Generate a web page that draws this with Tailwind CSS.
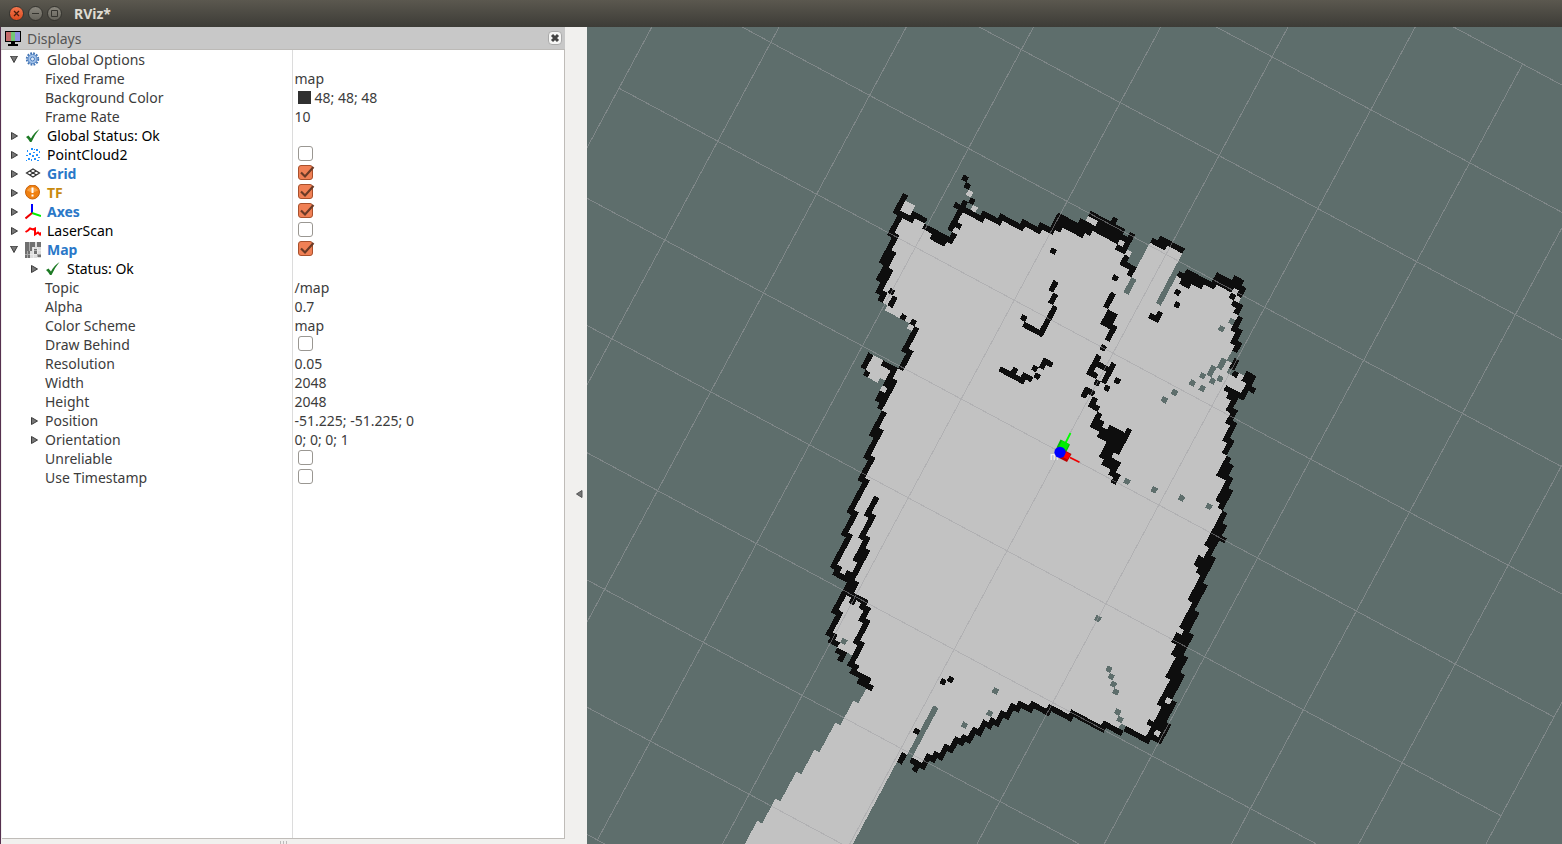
<!DOCTYPE html>
<html lang="en">
<head>
<meta charset="utf-8">
<title>RViz*</title>
<script src="https://cdn.jsdelivr.net/npm/@tailwindcss/browser@4"></script>
</head>
<body class="h-screen flex flex-col overflow-hidden bg-[#f1f0ee] font-['Noto_Sans',sans-serif] text-[14px] leading-[19px] text-[#3c3c3c]">

<svg class="hidden" aria-hidden="true">
  <symbol id="closed" viewBox="0 0 8 8"><path d="M1.500 .5v7L7.500 4z" fill="#777" stroke="#3c3c3c"/></symbol>
  <symbol id="open" viewBox="0 0 8 8"><path d="M.5 0h7L4 6.500z" fill="#777" stroke="#3c3c3c"/></symbol>
  <symbol id="ok" viewBox="0 0 16 16"><path d="M1 9l2.500-1.500 2.500 3Q9 4.500 14.500 1 9.500 7 6.500 14H5Q3.500 11 1 9z" fill="#1d7a24"/></symbol>
</svg>

<header class="h-[27px] shrink-0 flex items-center gap-1 pl-[9px] bg-linear-to-b from-[#5b584f] to-[#3d3c37]">
  <button aria-label="Close" class="size-[15px] rounded-full bg-linear-to-b from-[#f4764d] to-[#dc4a1c] border border-[#35342f]"><svg viewBox="0 0 13 13"><path d="M4 4l5 5M9 4l-5 5" stroke="#4a1d0c" stroke-width="1.300"/></svg></button>
  <button aria-label="Minimize" class="size-[15px] rounded-full bg-linear-to-b from-[#8a877e] to-[#65635b] border border-[#35342f]"><svg viewBox="0 0 13 13"><path d="M3 6.500h7" stroke="#35342f"/></svg></button>
  <button aria-label="Maximize" class="size-[15px] rounded-full bg-linear-to-b from-[#8a877e] to-[#65635b] border border-[#35342f]"><svg viewBox="0 0 13 13"><path d="M3.500 3.500h6v6h-6z" fill="none" stroke="#35342f"/></svg></button>
  <h1 class="pl-2 font-bold text-[#dfdbd2]">RViz*</h1>
</header>

<div class="flex-1 min-h-0 flex">
  <aside class="w-[565px] shrink-0 flex flex-col border-l border-[#55304f]">
    <div class="h-[23px] shrink-0 flex items-center pl-1 pr-[3px] bg-[#c8c8c8] border-b border-[#bcbab7] text-[#555]">
      <svg class="size-4" viewBox="0 0 16 16" shape-rendering="crispEdges"><path d="M0 1h16v11H0z"/><path d="M1 2h5v9H1z" fill="#c46a6a"/><path d="M6 2h4v9H6z" fill="#74c774"/><path d="M10 2h5v9h-5z" fill="#9090e0"/><path d="M6 12h4v2H6zM3 14h10v2H3z"/></svg>
      <h2 class="pl-1.5 flex-1">Displays</h2>
      <button aria-label="Close Displays" class="size-[14px] rounded bg-[#f7f7f6] border border-[#aaa]"><svg viewBox="0 0 12 12"><path d="M3 3l6 6M9 3l-6 6" stroke="#444" stroke-width="3"/></svg></button>
    </div>
    <div class="flex-1 min-h-0 ml-px bg-white border-r border-b border-[#bfbcb8]">
      <table class="w-full h-full table-fixed border-collapse">
        <colgroup><col class="w-[290px]"><col></colgroup>
        <tbody id="tree"></tbody>
      </table>
    </div>
    <div class="h-[5px] shrink-0 flex gap-0.5 pl-[279px] pt-0.5"><i class="w-px bg-[#bbb]"></i><i class="w-px bg-[#bbb]"></i><i class="w-px bg-[#bbb]"></i></div>
  </aside>
  <button aria-label="Hide left panel" class="w-[22px] shrink-0 flex items-center justify-center pl-1.5 pt-[116px] bg-[#f1f0ee]"><svg class="size-2" viewBox="0 0 8 8"><path d="M7 .5v7L1.500 4z" fill="#777" stroke="#555"/></svg></button>
  <main class="flex-1 min-w-0 bg-[#5e6e6c]">
    <svg class="block w-full h-full" viewBox="587 27 975 817" preserveAspectRatio="xMinYMin slice" shape-rendering="crispEdges" role="img" aria-label="3D view of the map">
      <g transform="matrix(4.940 2.650 -2.650 4.940 1060 452)">
        <path id="free" fill="#c2c2c2"/>
        <path id="wall" fill="#0e0e0e"/>
        <path id="gap" fill="#5e6e6c"/>
        <path id="speck" fill="#c2c2c2"/>
      </g>
      <path id="grid" fill="none" stroke="#a0a0a4" stroke-opacity=".5"/>
      <text x="1050" y="460" fill="#fff" font-size="10" font-family="Liberation Sans, sans-serif">m</text>
      <g shape-rendering="auto">
        <path d="M1064 446l6.500-13" stroke="#0f0" stroke-width="1.800"/>
        <path d="M1070 457.500l9.500 4.800" stroke="#e00" stroke-width="1.800"/>
        <path d="M1060.500 439.500l9.500 5-4 8-9.500-5z" fill="#0b0"/><path d="M1062 440.500l7 3.500-3 6-7-3.500z" fill="#0e0"/>
        <path d="M1064 450l7.500 4-4.500 8-8-4z" fill="#b00"/><path d="M1066 452l4.500 2.500-3 5-4.500-2.500z" fill="#f00"/>
        <circle cx="1060" cy="452.300" r="5.600" fill="#00f"/>
      </g>
    </svg>
  </main>
</div>

<script>
// ---- Displays tree ----
const svg = (body, extra = '') => `<svg class="size-4 shrink-0" viewBox="0 0 16 16" ${extra}>${body}</svg>`;
const crisp = 'shape-rendering="crispEdges"';
const icons = {
  gear: svg('<circle cx="7.500" cy="7" r="5.800" fill="none" stroke="#3f72b4" stroke-width="1.800" stroke-dasharray="1.800 1.236"/><circle cx="7.500" cy="7" r="4.600" fill="#a5c4ea" stroke="#4a7dbf"/><circle cx="7.500" cy="7" r="2" fill="#dfeaf8" stroke="#4a7dbf"/>'),
  ok: svg('<use href="#ok"/>'),
  cloud: svg('<path d="M6 1h2v2H6zM11 2h2v2h-2zM2 3h1v2H2zM8 5h2v1H8zM14 4h1v2h-1zM4 6h2v2H4zM1 8h2v1H1zM7 8h2v2H7zM11 7h2v2h-2zM13 10h2v1h-2zM3 11h2v2H3zM6 12h1v2H6zM9 11h2v2H9zM12 13h2v1h-2zM1 13h1v1H1zM9 2h1v1H9z" fill="#1e90ff"/>', crisp),
  grid: svg('<path d="M1.500 7L8 3l6.500 4L8 11zM4.800 5l6.500 4M11.200 5l-6.500 4" fill="none" stroke="#333" stroke-width="1.200"/>'),
  tf: svg('<circle cx="7.500" cy="7" r="7" fill="#f08010" stroke="#c8620a"/><path d="M2 5.500a6 5 0 0 1 11 0q-5.500 3-11 0z" fill="#f9b060" opacity=".7"/><path d="M6.500 2.500h2V8h-2zM6.500 9.500h2v2h-2z" fill="#fff"/>'),
  axes: svg('<path d="M7 9V0" stroke="#00f" stroke-width="2"/><path d="M7 9l9 3" stroke="#0e0" stroke-width="2"/><path d="M7 9L.5 14.500" stroke="#e00" stroke-width="2"/>'),
  laser: svg('<path d="M.5 9L3 7.500l2-2 3 1 2-1v6l3-2 2 2 1-2" fill="none" stroke="#f00" stroke-width="2"/>'),
  map: svg('<path d="M0 0h16v16H0z" fill="#dcdcdc"/><path d="M0 0h10v5H7v4H5v7H0zM12 0h4v5h-4zM9 7h3v5H9zM12 12h4v3h-4z" fill="#707070"/><path d="M2.500 9v7M0 12.500h16M12.500 5v11M8.500 5v11M9 8.500h7M4.500 0v9" stroke="#fff" stroke-opacity=".4"/>', crisp),
};
const tone = { dim: 'text-[#3c3c3c]', ok: 'text-black', on: 'font-bold text-[#2a78c8]', warn: 'font-bold text-[#c88a10]' };
// level, expander, icon, label, tone, value
const rows = [
  [0, 'open', 'gear', 'Global Options', 'dim'],
  [1, '', '', 'Fixed Frame', 'dim', 'map'],
  [1, '', '', 'Background Color', 'dim', '48; 48; 48'],
  [1, '', '', 'Frame Rate', 'dim', '10'],
  [0, 'closed', 'ok', 'Global Status: Ok', 'ok'],
  [0, 'closed', 'cloud', 'PointCloud2', 'ok', false],
  [0, 'closed', 'grid', 'Grid', 'on', true],
  [0, 'closed', 'tf', 'TF', 'warn', true],
  [0, 'closed', 'axes', 'Axes', 'on', true],
  [0, 'closed', 'laser', 'LaserScan', 'ok', false],
  [0, 'open', 'map', 'Map', 'on', true],
  [1, 'closed', 'ok', 'Status: Ok', 'ok'],
  [1, '', '', 'Topic', 'dim', '/map'],
  [1, '', '', 'Alpha', 'dim', '0.7'],
  [1, '', '', 'Color Scheme', 'dim', 'map'],
  [1, '', '', 'Draw Behind', 'dim', false],
  [1, '', '', 'Resolution', 'dim', '0.05'],
  [1, '', '', 'Width', 'dim', '2048'],
  [1, '', '', 'Height', 'dim', '2048'],
  [1, 'closed', '', 'Position', 'dim', '-51.225; -51.225; 0'],
  [1, 'closed', '', 'Orientation', 'dim', '0; 0; 0; 1'],
  [1, '', '', 'Unreliable', 'dim', false],
  [1, '', '', 'Use Timestamp', 'dim', false],
];
document.getElementById('tree').innerHTML = rows.map(([level, exp, icon, label, t, value], i) => {
  const pad = level ? (exp ? 'pl-7' : 'pl-[43px]') : 'pl-2';
  const toggle = exp ? `<button class="w-[9px] h-2 shrink-0" aria-label="Toggle ${label}" aria-expanded="${exp === 'open'}"><svg class="size-2" viewBox="0 0 8 8"><use href="#${exp}"/></svg></button>` : '';
  const name = typeof value === 'boolean' ? `<label for="f${i}">${label}</label>` : `<span>${label}</span>`;
  let v = '';
  if (typeof value === 'boolean') {
    v = `<span class="relative ml-[3px] mb-0.5 size-[15px]"><input type="checkbox" id="f${i}" ${value ? 'checked' : ''} class="peer block size-[15px] appearance-none rounded-[3px] border border-[#9a9792] bg-white checked:border-[#a8502c] checked:bg-[#f08055]"><svg class="hidden peer-checked:block absolute left-0 top-0 w-[17px] h-[15px] pointer-events-none" viewBox="0 0 17 15"><path d="M3 7.500L7 11.500 15.500 2" fill="none" stroke="#6b3a26" stroke-width="2.200"/></svg></span>`;
  } else if (value) {
    v = (label === 'Background Color' ? '<i class="size-[13px] ml-[3px] mr-1 bg-[#303030]"></i>' : '') + `<span>${value}</span>`;
  }
  return `<tr class="h-[19px]"><td class="p-0 border-r border-[#dcdcdc]"><div class="h-[19px] flex items-center gap-1.5 ${pad} ${tone[t]}">${toggle}${icon ? icons[icon] : ''}${name}</div></td><td class="p-0"><div class="h-[19px] flex items-center pl-0.5">${v}</div></td></tr>`;
}).join('') + '<tr><td class="p-0 border-r border-[#dcdcdc]"></td><td class="p-0"></td></tr>';

// ---- Occupancy map: outlines are turned into square cells of the rotated lattice ----
const A = 4.94, B = 2.65, N = A * A + B * B;
const toCell = (x, y) => [((x - 1060) * A + (y - 452) * B) / N, ((y - 452) * A - (x - 1060) * B) / N];
const layers = { free: new Set(), wall: new Set(), gap: new Set(), speck: new Set() };
const parse = s => s.trim().split(/\s+/).map(p => p.split(',').map(Number));

function line(layer, pts) {
  pts.forEach((p, i) => {
    const q = pts[Math.min(i + 1, pts.length - 1)];
    const n = Math.ceil(Math.hypot(q[0] - p[0], q[1] - p[1]) * 3) || 1;
    for (let k = 0; k <= n; k++) {
      const [u, v] = toCell(p[0] + (q[0] - p[0]) * k / n, p[1] + (q[1] - p[1]) * k / n);
      layers[layer].add(Math.round(u) + ' ' + Math.round(v));
    }
  });
}
function area(layer, pts) {
  const c = pts.map(p => toCell(p[0], p[1]));
  const us = c.map(p => p[0]), vs = c.map(p => p[1]);
  for (let u = Math.floor(Math.min(...us)); u <= Math.max(...us) + 1; u++)
    for (let v = Math.floor(Math.min(...vs)); v <= Math.max(...vs) + 1; v++) {
      let inside = false;
      for (let i = 0, j = c.length - 1; i < c.length; j = i++)
        if ((c[i][1] > v) !== (c[j][1] > v) && u < (c[j][0] - c[i][0]) * (v - c[i][1]) / (c[j][1] - c[i][1]) + c[i][0]) inside = !inside;
      if (inside) layers[layer].add(u + ' ' + v);
    }
}
// A section has an origin in view pixels; its points count thirds of a pixel from there.
function section(ox, oy, parts) {
  for (const [kind, list] of Object.entries(parts)) {
    const [layer, shape] = kind.split('_');
    for (const s of list.split(';')) {
      const pts = parse(s).map(([x, y]) => [ox + x / 3, oy + y / 3]);
      if (shape === 'area') area(layer, pts);
      else if (shape === 'dots') pts.forEach(p => line(layer, [p]));
      else line(layer, pts);
    }
  }
}

area('free', parse(`902,200 916,206 913,213 927,220 925,227 935,237 944,243 953,240 952,228 963,208 983,217 1000,222 1023,227 1042,229
 1050,230 1063,228 1093,233 1120,243 1130,253 1125,262 1134,273 1150,243 1183,252 1177,268 1180,277 1213,287 1237,290 1243,295 1238,305
 1241,317 1234,330 1240,337 1237,350 1232,367 1247,378 1243,390 1232,393 1233,412 1228,440 1225,470 1220,510 1210,547 1200,567 1190,607
 1178,643 1170,677 1162,707 1162,737 1147,740 1120,731 1103,727 1070,715 1050,708 1017,707 983,728 943,750 927,762 912,760 908,755
 902,757 897,763 848,853 740,853 744,843 757,820 762,822 775,799 780,801 796,772 801,773 813,749 819,751 835,722 839,724 853,701 858,702
 866,690 867,682 852,670 852,657 843,652 835,640 830,633 837,612 845,592 850,580 835,570 849,537 854,512 865,480 873,457 878,432 884,413
 882,397 885,383 865,375 865,367 872,353 885,362 900,368 908,352 917,328 908,327 907,323 891,312 883,303 880,292 887,270 892,250 898,235 898,215`));

section(820, 160, {
  wall_area: '232,625 215,655 232,662 203,722 165,722 180,698 200,692 193,680 213,632',
  wall_line: '257,107 232,155; 240,162 215,220; 240,162 275,178; 285,162 316,178; 318,199 400,240; 340,230 370,248; 404,230 396,242; 392,205 430,140; 410,135 430,145 488,176; 494,160 540,187; 546,168 608,205; 614,185 660,213; 668,195 690,208; 226,228 188,300; 221,282 203,316; 200,318 178,355; 212,332 178,395; 178,395 195,403; 224,412 214,435; 290,507 255,570; 271,575 245,622; 150,583 132,620; 192,607 225,630; 222,625 202,680; 222,664 195,715; 188,700 170,718; 614,493 662,520 690,465',
  wall_dots: '418,195 435,130 458,122 444,78 437,55 216,394 185,416 251,469 281,485 140,640 612,473',
  speck_dots: '451,100 465,146 272,500 205,418'
});
section(1030, 190, {
  wall_area: '0,100 28,113 35,98 65,112 90,70 125,92 120,100 150,95 160,88 172,95 185,65 245,100 252,82 265,90 258,108 288,120 280,128 300,138 305,128 318,135 285,190 262,178 262,165 250,150 225,150 190,130 180,140 165,132 155,142 100,116 85,125 65,112 45,118 30,130 0,118; 232,362 262,375 245,412 215,398; 370,143 385,150 395,138 465,178 457,190 415,170 410,182 362,160; 445,245 460,253 470,238 540,270 545,262 555,250 610,275 615,260 643,275 635,290 650,300 635,320 610,300 600,303 570,285 550,298 522,285 515,295 480,280 475,293 452,285 455,265 442,258',
  wall_line: '290,203 280,220; 290,225 312,240 305,255; 250,312 230,352; 253,412 235,450; 207,500 183,545 198,557; 200,520 228,538; 250,523 222,575; 175,600 162,618; 175,600 187,608; 190,628 182,645 200,655; 207,675 190,712; 612,340 630,350 622,372; 632,385 612,420; 628,428 612,455 628,462 620,485; 618,512 605,545; 615,552 608,572; 363,380 382,392 392,370; 77,275 65,300; 77,315 65,338; 77,352 37,430 0,410',
  wall_dots: '256,264 220,473 202,578 262,573 232,595 609,321 444,308 442,345 71,183 186,72 208,83 230,94',
  gap_line: '448,218 390,340; 312,270 292,308; 580,515 572,532; 548,535 540,555; 605,497 600,510',
  gap_dots: '606,395 575,418 518,558 487,580 517,597 548,575 570,568 434,608 403,630 600,545',
  speck_dots: '180,89 195,96 272,160 298,190 617,305 627,325 605,568 630,575'
});
section(980, 340, {
  wall_line: '68,88 128,122; 135,105 150,115; 187,78 200,62 215,70; 345,178 332,198 350,205',
  wall_dots: '106,92 165,84 172,108',
  wall_area: '385,258 425,275 430,285 442,262 455,272 415,342 398,340 395,355 420,370 410,400 418,412 405,432 393,425 398,408 385,400 390,385 362,370 372,350 358,348 378,305 352,290 358,275 330,260 350,218 370,230 360,245 375,255 372,265; 800,97 828,110 818,140 828,150 820,160 805,152 790,182 770,175 755,205 772,215 760,232 770,240 748,290 762,308 742,352 760,378 742,410 760,425 745,445 758,455 728,512 740,525 728,550 742,560 725,595 738,600 730,608 718,600 690,655 710,660 655,664 650,652 680,650 690,622 673,615 710,550 730,515 716,508 720,485 708,480 738,415 710,405 735,360 732,335 745,305 728,300 748,252 738,245 752,212 742,208 757,180 738,170 752,155 735,150 742,138 785,152 795,130 785,120',
  gap_dots: '440,425 522,450 604,475 686,500'
});
section(810, 380, {
  wall_area: '222,0 262,0 222,65 212,95 195,92 205,62 195,55 208,30 230,38 232,20 222,12; 110,575 145,608 125,640 100,630 115,600',
  wall_line: '222,100 185,160; 210,152 170,230; 187,235 150,295; 170,302 118,392; 133,400 102,460; 118,465 68,558; 78,562 75,578 120,600; 197,352 172,403; 190,408 155,470; 170,478 155,510; 158,520 138,538; 152,540 120,600; 105,632 72,692; 88,698 55,762; 65,770 62,785 80,793; 85,810 100,820 90,840; 120,640 170,662; 155,660 158,680; 175,687 155,718; 170,722 138,782; 152,790 120,852; 130,857 130,875 175,897; 150,907 182,922; 250,10 225,60',
  wall_dots: '112,575 170,515 125,665 397,905 420,898',
  gap_dots: '100,782 118,826 554,932'
});
section(730, 660, {
  wall_line: '517,283 507,308; 545,302 580,318; 600,298 612,282 630,295 648,257 665,270 672,250 690,250 698,232 712,245 735,208 745,218 760,200 775,195 788,180 802,190 818,158 832,168 848,137 860,148 868,128 900,145; 585,302 600,300',
  wall_dots: '557,213 553,327',
  gap_line: '613,143 535,285',
  gap_dots: '794,92 777,160 701,195'
});
section(1010, 540, {
  wall_line: '0,505 20,508 28,490 58,505 68,490 110,515 118,498 180,535; 185,517 275,570; 283,550 330,578; 348,568 410,600',
  wall_area: '592,0 592,12 605,20 595,50 568,48 550,75 562,80 558,98 572,105 562,135 532,182 550,188 540,215 508,262 522,270 515,282 497,280 485,302 495,308 483,343 500,348 465,410 480,415 440,492 455,500 440,545 420,540 410,550 420,562 408,590 410,612 422,600 447,612 480,558 470,545 497,490 485,485 523,408 515,400 532,355 520,345 548,290 540,280 567,218 558,208 590,140 578,130 618,58 600,45 625,0',
  gap_dots: '262,237 295,387 302,411 309,434 316,457 321,517 328,540 336,563',
  speck_dots: '473,484 440,580'
});
for (const [id, cells] of Object.entries(layers))
  document.getElementById(id).setAttribute('d', [...cells].map(c => {
    const [u, v] = c.split(' ').map(Number);
    return `M${u - 0.5} ${v - 0.5}h1v1h-1z`;
  }).join(''));

// ---- Reference grid, ten cells a side ----
const at = (a, b) => `${1060 + 98.8 * a - 53 * b} ${452 + 53 * a + 98.8 * b}`;
let g = '';
for (let i = -5; i <= 5; i++) g += `M${at(i, -5)}L${at(i, 5)}M${at(-5, i)}L${at(5, i)}`;
document.getElementById('grid').setAttribute('d', g);
</script>
</body>
</html>
